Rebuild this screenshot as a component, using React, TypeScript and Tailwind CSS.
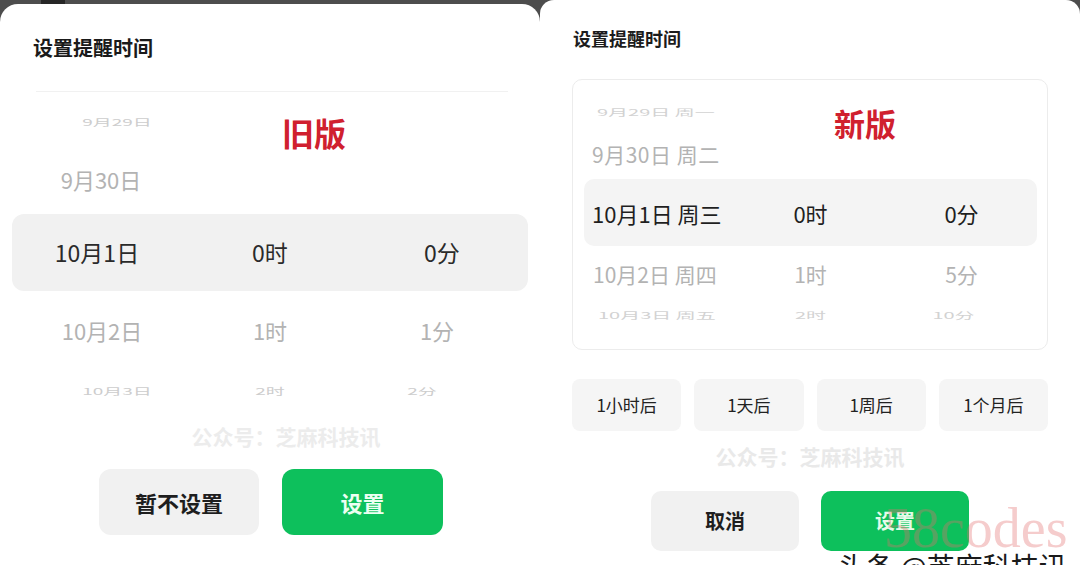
import React from "react";

type Cell = { t: string; cls?: string };

function OldRow({ h, cells, tone }: { h: string; cells: Cell[]; tone: "tiny" | "mid" | "sel" }) {
  const base =
    tone === "tiny"
      ? "inline-block scale-y-[0.5] text-[19px] text-[#cdcdcd]"
      : tone === "mid"
      ? "inline-block text-[22px] text-[#b3b3b3]"
      : "inline-block text-[23px] text-[#2a2a2a]";
  return (
    <div className={`grid w-[516px] grid-cols-3 items-center ${h}`}>
      {cells.map((c, i) => (
        <div key={i} className="text-center leading-none">
          <span className={`${base} ${c.cls ?? ""}`}>{c.t}</span>
        </div>
      ))}
    </div>
  );
}

function NewRow({ h, cells, tone }: { h: string; cells: Cell[]; tone: "tiny" | "mid" | "sel" }) {
  const base =
    tone === "tiny"
      ? "inline-block scale-y-[0.45] text-[20px] text-[#d2d2d2]"
      : tone === "mid"
      ? "inline-block text-[21px] text-[#b3b3b3]"
      : "inline-block text-[22px] text-[#1f1f1f]";
  return (
    <div className={`grid w-[453px] grid-cols-3 items-center ${h}`}>
      {cells.map((c, i) => (
        <div key={i} className={`leading-none ${i === 0 ? "pl-[8px] text-left" : "text-center"}`}>
          <span className={`${base} whitespace-pre ${c.cls ?? ""}`}>{c.t}</span>
        </div>
      ))}
    </div>
  );
}

function OldPanel() {
  return (
    <div className="flex w-[540px] flex-col">
      <div className="h-[4px] w-full">
        <div className="ml-[41px] h-full w-[24px] bg-[#262626]" />
      </div>
      <div className="relative w-[540px] flex-1 rounded-t-[18px] bg-white">
        <h1 className="pl-[33px] pt-[34px] text-[20px] font-bold leading-none text-[#1a1a1a]">设置提醒时间</h1>
        <div className="ml-[36px] mt-[33px] h-px w-[472px] bg-[#f1f1f1]" />
        <div className="ml-[12px] flex w-[516px] flex-col">
          <OldRow
            h="h-[58px]"
            tone="tiny"
            cells={[{ t: "9月29日", cls: "translate-x-[19px]" }, { t: "" }, { t: "" }]}
          />
          <OldRow h="h-[58px]" tone="mid" cells={[{ t: "9月30日", cls: "translate-x-[3px]" }, { t: "" }, { t: "" }]} />
          <div className="mt-[6px] h-[77px] w-[516px] rounded-[12px] bg-[#f1f1f1]">
            <OldRow
              h="h-[77px]"
              tone="sel"
              cells={[{ t: "10月1日", cls: "-translate-x-[1px]" }, { t: "0时" }, { t: "0分" }]}
            />
          </div>
          <OldRow
            h="h-[78px]"
            tone="mid"
            cells={[{ t: "10月2日", cls: "translate-x-[4px]" }, { t: "1时" }, { t: "1分", cls: "-translate-x-[5px]" }]}
          />
          <OldRow
            h="h-[42px]"
            tone="tiny"
            cells={[
              { t: "10月3日", cls: "translate-x-[19px]" },
              { t: "2时" },
              { t: "2分", cls: "-translate-x-[20px]" },
            ]}
          />
        </div>
        <div className="flex h-[50px] items-center justify-center pl-[32px] text-[21px] font-bold leading-none text-[#ececec]">
          公众号：芝麻科技讯
        </div>
        <div className="mt-[8px] flex justify-center gap-[23px] pl-[2px]">
          <button className="flex h-[66px] w-[160px] items-center justify-center rounded-[12px] bg-[#f1f1f1] text-[22px] font-bold text-[#1e1e1e]">
            暂不设置
          </button>
          <button className="flex h-[66px] w-[161px] items-center justify-center rounded-[12px] bg-[#0dc05c] text-[22px] font-bold text-[#ecfff2]">
            设置
          </button>
        </div>
        <div className="absolute left-[282px] top-[112px] text-[32px] font-bold leading-none text-[#d0202e]">旧版</div>
      </div>
    </div>
  );
}

function NewPanel() {
  return (
    <div className="flex w-[540px] flex-col">
      <div className="relative w-[540px] flex-1 rounded-t-[14px] bg-white">
        <h1 className="pl-[33px] pt-[29px] text-[18px] font-semibold leading-none text-[#1c1c1c]">设置提醒时间</h1>
        <div className="relative ml-[32px] mt-[32px] h-[271px] w-[476px] rounded-[10px] border border-[#ececec] pt-[12px]">
          <div className="ml-[11px] flex flex-col">
            <NewRow h="h-[40px]" tone="tiny" cells={[{ t: "9月29日 周一", cls: "translate-x-[5px]" }, { t: "" }, { t: "" }]} />
            <NewRow h="h-[44px]" tone="mid" cells={[{ t: "9月30日 周二", cls: "tracking-[0.5px]" }, { t: "" }, { t: "" }]} />
            <div className="mt-[3px] h-[67px] w-[453px] rounded-[10px] bg-[#f4f4f4]">
              <NewRow h="h-[67px]" tone="sel" cells={[{ t: "10月1日 周三" }, { t: "0时" }, { t: "0分" }]} />
            </div>
            <NewRow
              h="h-[56px]"
              tone="mid"
              cells={[{ t: "10月2日 周四", cls: "translate-x-[1px]" }, { t: "1时" }, { t: "5分" }]}
            />
            <NewRow
              h="h-[26px]"
              tone="tiny"
              cells={[{ t: "10月3日 周五", cls: "translate-x-[6px]" }, { t: "2时" }, { t: "10分", cls: "-translate-x-[8px]" }]}
            />
          </div>
          <div className="absolute left-[261px] top-[27px] text-[31px] font-bold leading-none text-[#d0202e]">新版</div>
        </div>
        <div className="ml-[32px] mt-[29px] flex w-[476px] gap-[13px]">
          {["1小时后", "1天后", "1周后", "1个月后"].map((t) => (
            <div
              key={t}
              className="flex h-[52px] flex-1 items-center justify-center rounded-[8px] bg-[#f5f5f5] text-[17px] text-[#222]"
            >
              {t}
            </div>
          ))}
        </div>
        <div className="mt-[15px] flex h-[21px] items-center justify-center text-[21px] font-bold leading-none text-[#e9e9e9]">
          公众号：芝麻科技讯
        </div>
        <div className="mt-[24px] flex justify-center gap-[22px]">
          <button className="flex h-[60px] w-[148px] items-center justify-center rounded-[10px] bg-[#f1f1f1] text-[20px] font-bold text-[#1e1e1e]">
            取消
          </button>
          <button className="flex h-[60px] w-[148px] items-center justify-center rounded-[10px] bg-[#0dc05c] text-[20px] font-bold text-[#e6fbe9]">
            设置
          </button>
        </div>
      </div>
    </div>
  );
}

export default function App() {
  return (
    <div className="relative flex h-[565px] w-[1080px] overflow-hidden bg-[#4d4d4d] font-['Noto_Sans_CJK_SC','Noto_Sans',sans-serif]">
      <OldPanel />
      <NewPanel />
      <div className="pointer-events-none absolute left-[884px] top-[500px] font-['Liberation_Serif',serif] text-[56px] leading-none text-[rgba(225,110,110,0.35)]">
        58codes
      </div>
      <div className="pointer-events-none absolute left-[838px] top-[552px] whitespace-nowrap text-[28px] leading-none text-[#1a1a1a]">
        头条 @芝麻科技讯
      </div>
    </div>
  );
}
